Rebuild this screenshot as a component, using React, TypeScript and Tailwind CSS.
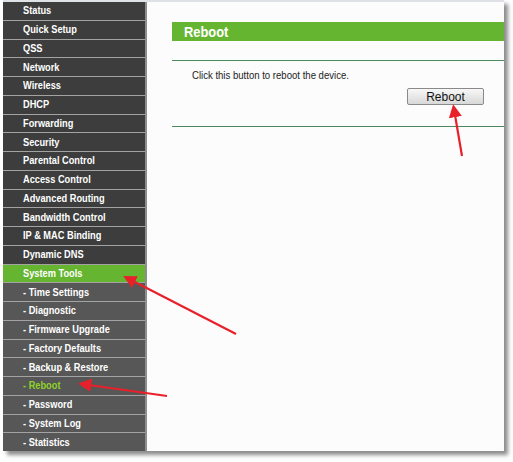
import React from "react";

const main = [
  "Status",
  "Quick Setup",
  "QSS",
  "Network",
  "Wireless",
  "DHCP",
  "Forwarding",
  "Security",
  "Parental Control",
  "Access Control",
  "Advanced Routing",
  "Bandwidth Control",
  "IP & MAC Binding",
  "Dynamic DNS",
];
const sub = [
  "- Time Settings",
  "- Diagnostic",
  "- Firmware Upgrade",
  "- Factory Defaults",
  "- Backup & Restore",
  "- Reboot",
  "- Password",
  "- System Log",
  "- Statistics",
];

function Row({ t, bg, color }: { t: string; bg: string; color: string }) {
  return (
    <div className={`flex-1 flex items-center pl-[20px] ${bg}`}>
      <span className={`inline-block origin-left scale-x-[0.84] font-bold text-[11px] leading-none whitespace-nowrap ${color}`}>{t}</span>
    </div>
  );
}

export default function App() {
  return (
    <div className="relative w-[513px] h-[462px] bg-white overflow-hidden" style={{ fontFamily: '"Liberation Sans", Arial, sans-serif' }}>
      <div className="absolute left-[3px] top-0 w-[501px] h-[451px] flex bg-[#fcfcfc] border-t-2 border-[#dfe3e8] shadow-[4px_4px_4px_rgba(0,0,0,0.45)]">
        <div className="w-[144px] h-full flex flex-col bg-[#a3a3a3] gap-px border-r-[2px] border-[#8e8e8e]">
          {main.map((t) => (
            <Row key={t} t={t} bg="bg-[#3d3d3d]" color="text-white" />
          ))}
          <Row t="System Tools" bg="bg-[#66b531]" color="text-white" />
          {sub.map((t) => (
            <Row key={t} t={t} bg="bg-[#575757]" color={t === "- Reboot" ? "text-[#8fd12a]" : "text-white"} />
          ))}
        </div>
        <div className="flex-1 pl-[25px] pt-[20px]">
          <div className="h-[19px] bg-[#66b531] flex items-center pl-[12px]">
            <span className="inline-block origin-left scale-x-[0.92] text-white font-bold text-[14px] leading-none">Reboot</span>
          </div>
          <div className="mt-[19px] h-px bg-[#4b8a5f]" />
          <div className="pl-[20px] pt-[8px] h-[27px] flex items-start text-[11px] leading-[13px]">
            <span className="inline-block origin-left scale-x-[0.87] text-[#222] whitespace-nowrap">Click this button to reboot the device.</span>
          </div>
          <div className="flex justify-end pr-[20px]">
            <button className="w-[77px] h-[17px] rounded-[2px] border border-[#8a8a8a] bg-gradient-to-b from-[#f8f8f8] to-[#d8d8d8] text-[12px] leading-none text-[#111]">
              Reboot
            </button>
          </div>
          <div className="mt-[21px] h-px bg-[#4b8a5f]" />
        </div>
      </div>
      <svg className="absolute inset-0 pointer-events-none" width="513" height="462">
        <defs>
          <marker id="ah" markerWidth="6" markerHeight="6" refX="1" refY="3" orient="auto" markerUnits="strokeWidth">
            <path d="M0,0 L6,3 L0,6 z" fill="#e8202a" />
          </marker>
        </defs>
        <line x1="236" y1="334" x2="133" y2="281" stroke="#e8202a" strokeWidth="2.2" markerEnd="url(#ah)" />
        <line x1="167" y1="396" x2="89" y2="385" stroke="#e8202a" strokeWidth="2.2" markerEnd="url(#ah)" />
        <line x1="462" y1="156" x2="455" y2="115" stroke="#e8202a" strokeWidth="2.2" markerEnd="url(#ah)" />
      </svg>
    </div>
  );
}
